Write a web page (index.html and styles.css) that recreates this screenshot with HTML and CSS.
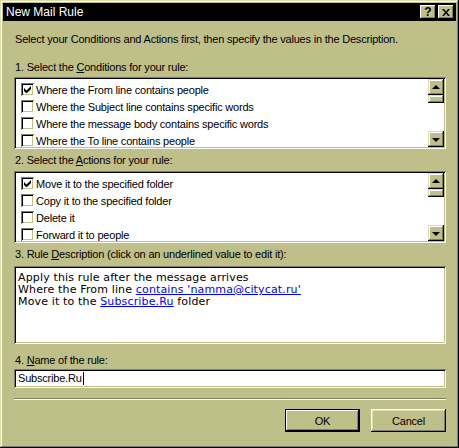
FILE: index.html
```html
<!DOCTYPE html>
<html>
<head>
<meta charset="utf-8">
<title>New Mail Rule</title>
<link rel="stylesheet" href="styles.css">
</head>
<body>
<div class="window">
  <div class="titlebar">
    <span class="title">New Mail Rule</span>
    <div class="tbtns">
      <span class="tbtn help">?</span>
      <span class="tbtn close"><svg width="8" height="7" viewBox="0 0 8 7"><path d="M0 0h2l2 2.5L6 0h2L5 3.5 8 7H6L4 4.5 2 7H0l3-3.5z" fill="#000"/></svg></span>
    </div>
  </div>
  <div class="content">
    <p class="intro">Select your Conditions and Actions first, then specify the values in the Description.</p>

    <div class="label l1">1. Select the <u>C</u>onditions for your rule:</div>
    <div class="list">
      <div class="items">
        <div class="item"><span class="cb checked"><svg width="7" height="7" viewBox="0 0 7 7"><path d="M0 2v3l2 2h1l4-4V0L2.5 4.5z" fill="#000"/></svg></span>Where the From line contains people</div>
        <div class="item"><span class="cb"></span>Where the Subject line contains specific words</div>
        <div class="item"><span class="cb"></span>Where the message body contains specific words</div>
        <div class="item"><span class="cb"></span>Where the To line contains people</div>
      </div>
      <div class="scrollbar">
        <div class="sbtn up"><span class="arr-up"></span></div>
        <div class="thumb"></div>
        <div class="track"></div>
        <div class="sbtn down"><span class="arr-down"></span></div>
      </div>
    </div>

    <div class="label l2">2. Select the <u>A</u>ctions for your rule:</div>
    <div class="list">
      <div class="items">
        <div class="item"><span class="cb checked"><svg width="7" height="7" viewBox="0 0 7 7"><path d="M0 2v3l2 2h1l4-4V0L2.5 4.5z" fill="#000"/></svg></span>Move it to the specified folder</div>
        <div class="item"><span class="cb"></span>Copy it to the specified folder</div>
        <div class="item"><span class="cb"></span>Delete it</div>
        <div class="item"><span class="cb"></span>Forward it to people</div>
      </div>
      <div class="scrollbar">
        <div class="sbtn up"><span class="arr-up"></span></div>
        <div class="thumb"></div>
        <div class="track"></div>
        <div class="sbtn down"><span class="arr-down"></span></div>
      </div>
    </div>

    <div class="label l3">3. Rule <u>D</u>escription (click on an underlined value to edit it):</div>
    <div class="desc">
      <div>Apply this rule after the message arrives</div>
      <div>Where the From line <a class="link">contains 'namma@citycat.ru'</a></div>
      <div>Move it to the <a class="link">Subscribe.Ru</a> folder</div>
    </div>

    <div class="label l4">4. <u>N</u>ame of the rule:</div>
    <div class="input">Subscribe.Ru<span class="caret"></span></div>

    <div class="separator"></div>

    <div class="buttons">
      <div class="btn default">OK</div>
      <div class="btn">Cancel</div>
    </div>
  </div>
</div>
</body>
</html>
```

FILE: styles.css
```css
html, body {
  margin: 0;
  padding: 0;
  background: #bfbf8a;
}

body {
  font-family: "Liberation Sans", Arial, sans-serif;
  font-size: 11px;
  letter-spacing: -0.2px;
  color: #000;
}

.window {
  box-sizing: border-box;
  width: 459px;
  height: 448px;
  padding: 3px;
  background: #bfbf8a;
  box-shadow:
    inset -1px -1px #000,
    inset 1px 1px #dcdcae,
    inset -2px -2px #80805e,
    inset 2px 2px #fff;
}

.titlebar {
  height: 18px;
  background: #000;
  display: flex;
  align-items: center;
  justify-content: space-between;
  padding: 0 2px 0 3px;
}

.title {
  color: #fff;
  font-size: 12px;
  letter-spacing: 0;
}

.tbtns {
  display: flex;
  gap: 2px;
}

.tbtn {
  box-sizing: border-box;
  width: 16px;
  height: 14px;
  background: #bfbf8a;
  display: flex;
  align-items: center;
  justify-content: center;
  box-shadow:
    inset -1px -1px #000,
    inset 1px 1px #fff,
    inset -2px -2px #80805e;
}

.help {
  font-weight: bold;
  font-size: 12px;
  letter-spacing: 0;
  line-height: 14px;
}

.content {
  padding: 0 10px 0 11px;
}

.intro {
  margin: 12px 0 0 1px;
  line-height: 13px;
}

.label {
  line-height: 13px;
  margin-left: 1px;
}

.l1 { margin-top: 15px; margin-bottom: 3px; }
.l2 { margin-top: 5px; margin-bottom: 4px; }
.l3 { margin-top: 5px; margin-bottom: 5px; }
.l4 { margin-top: 10px; margin-bottom: 2px; }

.list, .desc, .input {
  background: #fff;
  box-shadow:
    inset 1px 1px #80805e,
    inset -1px -1px #fff,
    inset 2px 2px #000,
    inset -2px -2px #bfbf8a;
}

.list {
  box-sizing: border-box;
  height: 72px;
  padding: 2px;
  display: flex;
}

.items {
  flex: 1;
  padding: 2px 0 0 5px;
  overflow: hidden;
}

.item {
  height: 17px;
  display: flex;
  align-items: center;
  white-space: nowrap;
}

.cb {
  box-sizing: border-box;
  width: 13px;
  height: 13px;
  margin-right: 2px;
  background: #fff;
  flex: none;
  display: flex;
  align-items: center;
  justify-content: center;
  box-shadow:
    inset 1px 1px #80805e,
    inset -1px -1px #fff,
    inset 2px 2px #000,
    inset -2px -2px #bfbf8a;
}

.scrollbar {
  width: 16px;
  display: flex;
  flex-direction: column;
  flex: none;
}

.sbtn, .thumb {
  box-sizing: border-box;
  background: #bfbf8a;
  box-shadow:
    inset -1px -1px #000,
    inset 1px 1px #dcdcae,
    inset -2px -2px #80805e,
    inset 2px 2px #fff;
}

.sbtn {
  height: 16px;
  display: flex;
  align-items: center;
  justify-content: center;
}

.thumb {
  height: 8px;
}

.track {
  flex: 1;
  background: #fff;
}

.arr-up {
  width: 0;
  height: 0;
  border-left: 4px solid transparent;
  border-right: 4px solid transparent;
  border-bottom: 4px solid #000;
  margin-top: -1px;
}

.arr-down {
  width: 0;
  height: 0;
  border-left: 4px solid transparent;
  border-right: 4px solid transparent;
  border-top: 4px solid #000;
  margin-top: 1px;
}

.desc {
  box-sizing: border-box;
  height: 78px;
  padding: 6px 4px 0 4px;
  font-family: "DejaVu Sans", Verdana, sans-serif;
  font-size: 11px;
  letter-spacing: 0.15px;
  line-height: 12px;
}

.link {
  color: #0000ff;
  text-decoration: underline;
}

.input {
  box-sizing: border-box;
  height: 19px;
  padding: 2px 4px;
  line-height: 15px;
  display: flex;
  align-items: center;
}

.caret {
  width: 1px;
  height: 13px;
  background: #000;
  margin-left: 1px;
}

.separator {
  margin-top: 10px;
  border-top: 1px solid #80805e;
  border-bottom: 1px solid #fff;
}

.buttons {
  margin-top: 9px;
  display: flex;
  justify-content: flex-end;
  gap: 11px;
}

.btn {
  box-sizing: border-box;
  width: 75px;
  height: 23px;
  display: flex;
  align-items: center;
  justify-content: center;
  background: #bfbf8a;
  box-shadow:
    inset -1px -1px #000,
    inset 1px 1px #fff,
    inset -2px -2px #80805e,
    inset 2px 2px #dcdcae;
}

.btn.default {
  box-shadow:
    inset 0 0 0 1px #000,
    inset -2px -2px #000,
    inset 2px 2px #fff,
    inset -3px -3px #80805e;
}
```
